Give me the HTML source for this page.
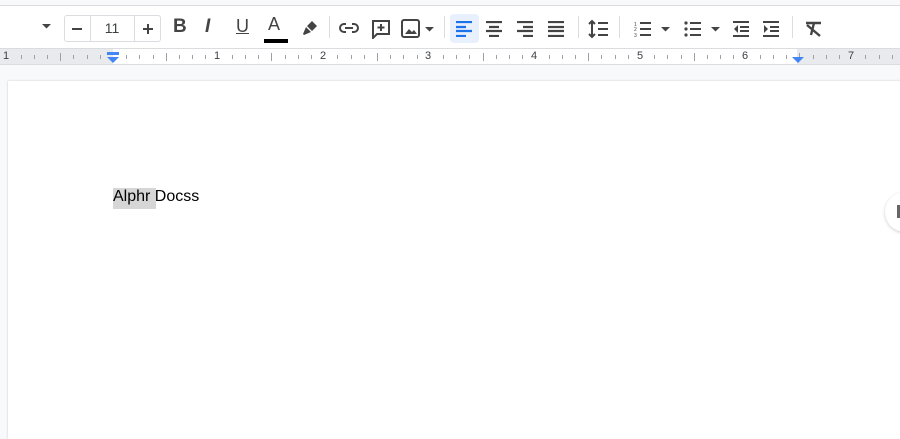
<!DOCTYPE html>
<html><head><style>
*{margin:0;padding:0;box-sizing:border-box}
html,body{width:900px;height:439px;overflow:hidden}
body{background:#f8f9fa;font-family:"Liberation Sans",Arial,sans-serif;position:relative}
.tb{position:absolute;left:0;width:900px;background:#fff;border-top:1px solid #dadce0;top:5px;height:43px}
.ic{position:absolute;top:12px}
.sep{position:absolute;top:10px;width:1px;height:22px;background:#dadce0}
.ruler{position:absolute;left:0;top:48px;width:900px;height:17px;background:#fff;border-top:1px solid #dadce0;border-bottom:1px solid #dadce0}
.gray{position:absolute;top:0;height:15px;background:#e8eaed}
.num{position:absolute;top:1px;font-size:11px;color:#3c4043}
.tk{position:absolute;width:1px;background:#9aa0a6}
.page{position:absolute;left:8px;top:81px;width:900px;height:358px;background:#fff;box-shadow:0 0 2px rgba(0,0,0,.2)}
</style></head><body>
<div class="tb">
<svg class="ic" style="left:41px;top:17px" width="12" height="6"><path d="M1 1h9l-4.5 4.5z" fill="#444"/></svg>
<div style="position:absolute;left:64px;top:9px;width:97px;height:27px;border:1px solid #dadce0;border-radius:3px"></div>
<div style="position:absolute;left:90px;top:9px;width:1px;height:27px;background:#dadce0"></div>
<div style="position:absolute;left:134px;top:9px;width:1px;height:27px;background:#dadce0"></div>
<div style="position:absolute;left:72px;top:22px;width:10px;height:2px;background:#444"></div>
<div style="position:absolute;left:90px;top:14px;width:44px;text-align:center;font-size:14px;color:#3c4043">11</div>
<div style="position:absolute;left:143px;top:22px;width:10px;height:2px;background:#444"></div>
<div style="position:absolute;left:147px;top:18px;width:2px;height:10px;background:#444"></div>
<div style="position:absolute;left:173px;top:10px;font-weight:bold;font-size:19px;color:#444">B</div>
<div style="position:absolute;left:205px;top:10px;font-style:italic;font-weight:bold;font-size:19px;color:#444">I</div>
<div style="position:absolute;left:236px;top:10px;text-decoration:underline;font-size:18px;color:#444">U</div>
<div style="position:absolute;left:268px;top:8px;font-size:18px;color:#444">A</div>
<div style="position:absolute;left:264px;top:33px;width:24px;height:4px;background:#000"></div>
<svg class="ic" style="left:300px;top:14px" width="18" height="18"><path d="M3 14l3-7 5 5-7 3zM7 6l5-5 5 5-5 5z" fill="#444"/></svg>
<div class="sep" style="left:329px"></div>
<svg class="ic" style="left:338px;top:16px" width="22" height="12"><path d="M8 2H6a4 4 0 000 8h2M14 2h2a4 4 0 010 8h-2M7 6h8" stroke="#444" stroke-width="2" fill="none"/></svg>
<svg class="ic" style="left:371px;top:13px" width="20" height="20"><path d="M2 2h16v13H6l-4 4z" stroke="#444" stroke-width="2" fill="none"/><path d="M10 5v7M6.5 8.5h7" stroke="#444" stroke-width="2"/></svg>
<svg class="ic" style="left:401px;top:13px" width="20" height="20"><rect x="1" y="1" width="17" height="17" rx="2" stroke="#444" stroke-width="2" fill="none"/><path d="M4 15l4-5 3 3 2-2 3 4z" fill="#444"/></svg>
<svg class="ic" style="left:425px;top:21px" width="10" height="6"><path d="M0 0h9l-4.5 4.5z" fill="#444"/></svg>
<div class="sep" style="left:444px"></div>
<div style="position:absolute;left:450px;top:8px;width:29px;height:29px;background:#e8f0fe;border-radius:4px"></div>
<svg class="ic" style="left:456px;top:15px" width="18" height="16"><path d="M0 1h16M0 6h10M0 10h16M0 15h10" stroke="#1a73e8" stroke-width="2.2"/></svg>
<svg class="ic" style="left:486px;top:15px" width="18" height="16"><path d="M0 1h16M3 6h10M0 10h16M3 15h10" stroke="#444" stroke-width="2.2"/></svg>
<svg class="ic" style="left:517px;top:15px" width="18" height="16"><path d="M0 1h16M6 6h10M0 10h16M6 15h10" stroke="#444" stroke-width="2.2"/></svg>
<svg class="ic" style="left:548px;top:15px" width="18" height="16"><path d="M0 1h16M0 6h16M0 10h16M0 15h16" stroke="#444" stroke-width="2.2"/></svg>
<div class="sep" style="left:578px"></div>
<svg class="ic" style="left:588px;top:13px" width="22" height="20"><path d="M4 2v16M1 5l3-3 3 3M1 15l3 3 3-3M10 4h10M10 10h10M10 16h10" stroke="#444" stroke-width="2" fill="none"/></svg>
<div class="sep" style="left:619px"></div>
<svg class="ic" style="left:634px;top:14px" width="18" height="18"><path d="M6 3h11M6 9h11M6 15h11" stroke="#444" stroke-width="2"/><text x="0" y="6" font-size="5" fill="#444">1</text><text x="0" y="11" font-size="5" fill="#444">2</text><text x="0" y="17" font-size="5" fill="#444">3</text></svg>
<svg class="ic" style="left:661px;top:21px" width="10" height="6"><path d="M0 0h9l-4.5 4.5z" fill="#444"/></svg>
<svg class="ic" style="left:684px;top:14px" width="18" height="18"><circle cx="2" cy="3" r="1.6" fill="#444"/><circle cx="2" cy="9" r="1.6" fill="#444"/><circle cx="2" cy="15" r="1.6" fill="#444"/><path d="M6 3h11M6 9h11M6 15h11" stroke="#444" stroke-width="2"/></svg>
<svg class="ic" style="left:711px;top:21px" width="10" height="6"><path d="M0 0h9l-4.5 4.5z" fill="#444"/></svg>
<svg class="ic" style="left:733px;top:14px" width="18" height="18"><path d="M0 2h16M7 7h9M7 11h9M0 16h16" stroke="#444" stroke-width="2"/><path d="M5 5v8L1 9z" fill="#444"/></svg>
<svg class="ic" style="left:763px;top:14px" width="18" height="18"><path d="M0 2h16M7 7h9M7 11h9M0 16h16" stroke="#444" stroke-width="2"/><path d="M1 5v8l4-4z" fill="#444"/></svg>
<div class="sep" style="left:792px"></div>
<svg class="ic" style="left:805px;top:15px" width="18" height="16"><path d="M1 2h15M9 2L6 14M2 4l13 11" stroke="#444" stroke-width="2.4" fill="none"/></svg>
</div>
<div class="ruler">
<div class="gray" style="left:0;width:113px"></div>
<div class="gray" style="left:797px;width:103px"></div>
<div id="tk"></div>
<span class="num" style="left:3px">1</span>
<span class="num" style="left:214px">1</span>
<span class="num" style="left:320px">2</span>
<span class="num" style="left:425px">3</span>
<span class="num" style="left:531px">4</span>
<span class="num" style="left:637px">5</span>
<span class="num" style="left:742px">6</span>
<span class="num" style="left:848px">7</span>
<svg style="position:absolute;left:106px;top:3px" width="14" height="12"><rect x="1" y="0" width="12" height="3" fill="#4285f4"/><path d="M1 5h12l-6 6z" fill="#4285f4"/></svg>
<svg style="position:absolute;left:791px;top:8px" width="14" height="8"><path d="M1 0h12l-6 6z" fill="#4285f4"/></svg>
</div>
<script>
var h='';for(var i=0;i<70;i++){var x=113-105.6+i*13.2;if(i%8==0)continue;var l=(i%4==0)?8:4;h+='<div class="tk" style="left:'+Math.round(x)+'px;top:'+(l==8?4:6)+'px;height:'+l+'px"></div>';}
document.getElementById('tk').outerHTML=h;
</script>
<div class="page"></div>
<div style="position:absolute;left:113px;top:188px;width:43px;height:21px;background:#d6d6d6"></div>
<div style="position:absolute;left:113px;top:187px;font-size:16px;color:#000;line-height:20px">Alphr Docss</div>
<div style="position:absolute;left:885px;top:192px;width:40px;height:40px;border-radius:50%;background:#fff;box-shadow:0 1px 3px rgba(0,0,0,.2)"></div>
<div style="position:absolute;left:897px;top:205px;width:4px;height:13px;background:#666"></div>
</body></html>
